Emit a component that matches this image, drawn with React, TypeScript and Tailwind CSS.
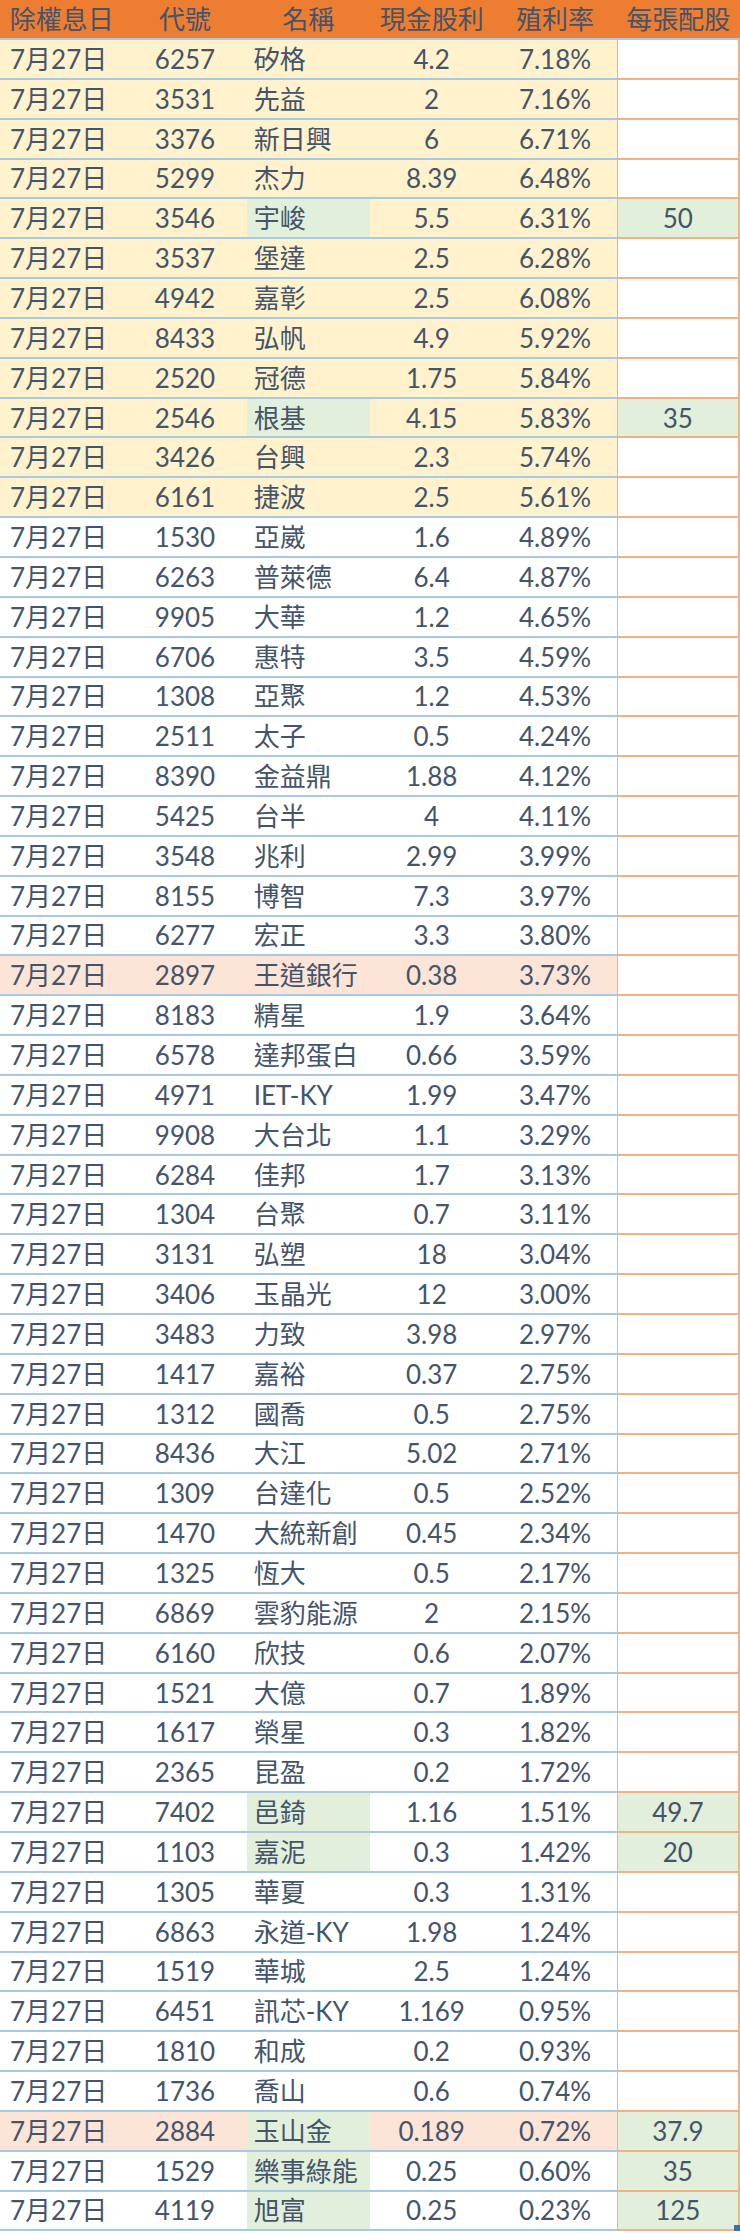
type Row = [string, string, string, string, string?];

// 除權息日 7月27日 — 代號, 名稱, 現金股利, 殖利率, 每張配股
const rows: Row[] = [
  ['6257', '矽格', '4.2', '7.18%'],
  ['3531', '先益', '2', '7.16%'],
  ['3376', '新日興', '6', '6.71%'],
  ['5299', '杰力', '8.39', '6.48%'],
  ['3546', '宇峻', '5.5', '6.31%', '50'],
  ['3537', '堡達', '2.5', '6.28%'],
  ['4942', '嘉彰', '2.5', '6.08%'],
  ['8433', '弘帆', '4.9', '5.92%'],
  ['2520', '冠德', '1.75', '5.84%'],
  ['2546', '根基', '4.15', '5.83%', '35'],
  ['3426', '台興', '2.3', '5.74%'],
  ['6161', '捷波', '2.5', '5.61%'],
  ['1530', '亞崴', '1.6', '4.89%'],
  ['6263', '普萊德', '6.4', '4.87%'],
  ['9905', '大華', '1.2', '4.65%'],
  ['6706', '惠特', '3.5', '4.59%'],
  ['1308', '亞聚', '1.2', '4.53%'],
  ['2511', '太子', '0.5', '4.24%'],
  ['8390', '金益鼎', '1.88', '4.12%'],
  ['5425', '台半', '4', '4.11%'],
  ['3548', '兆利', '2.99', '3.99%'],
  ['8155', '博智', '7.3', '3.97%'],
  ['6277', '宏正', '3.3', '3.80%'],
  ['2897', '王道銀行', '0.38', '3.73%'],
  ['8183', '精星', '1.9', '3.64%'],
  ['6578', '達邦蛋白', '0.66', '3.59%'],
  ['4971', 'IET-KY', '1.99', '3.47%'],
  ['9908', '大台北', '1.1', '3.29%'],
  ['6284', '佳邦', '1.7', '3.13%'],
  ['1304', '台聚', '0.7', '3.11%'],
  ['3131', '弘塑', '18', '3.04%'],
  ['3406', '玉晶光', '12', '3.00%'],
  ['3483', '力致', '3.98', '2.97%'],
  ['1417', '嘉裕', '0.37', '2.75%'],
  ['1312', '國喬', '0.5', '2.75%'],
  ['8436', '大江', '5.02', '2.71%'],
  ['1309', '台達化', '0.5', '2.52%'],
  ['1470', '大統新創', '0.45', '2.34%'],
  ['1325', '恆大', '0.5', '2.17%'],
  ['6869', '雲豹能源', '2', '2.15%'],
  ['6160', '欣技', '0.6', '2.07%'],
  ['1521', '大億', '0.7', '1.89%'],
  ['1617', '榮星', '0.3', '1.82%'],
  ['2365', '昆盈', '0.2', '1.72%'],
  ['7402', '邑錡', '1.16', '1.51%', '49.7'],
  ['1103', '嘉泥', '0.3', '1.42%', '20'],
  ['1305', '華夏', '0.3', '1.31%'],
  ['6863', '永道-KY', '1.98', '1.24%'],
  ['1519', '華城', '2.5', '1.24%'],
  ['6451', '訊芯-KY', '1.169', '0.95%'],
  ['1810', '和成', '0.2', '0.93%'],
  ['1736', '喬山', '0.6', '0.74%'],
  ['2884', '玉山金', '0.189', '0.72%', '37.9'],
  ['1529', '樂事綠能', '0.25', '0.60%', '35'],
  ['4119', '旭富', '0.25', '0.23%', '125'],
];

const pinkCodes = ['2897', '2884'];
const headers = ['除權息日', '代號', '名稱', '現金股利', '殖利率', '每張配股'];

const cell = 'flex items-center border-b-2 border-[#A8C8E4]';

export default function App() {
  return (
    <div className="relative w-[740px] bg-white text-[26px] leading-none text-[#44546A] font-['Lato','Noto_Sans_CJK_TC',sans-serif]">
      {/* header */}
      <div className="grid grid-cols-6 h-[40px] bg-[#ED7D31] border-b-2 border-[#B7C6D6]">
        {headers.map(h => (
          <div key={h} className="flex items-center justify-center">{h}</div>
        ))}
      </div>

      {rows.map(([code, name, cash, yld, extra], i) => {
        const bg = pinkCodes.includes(code) ? 'bg-[#FCE4D6]' : i < 12 ? 'bg-[#FFF2CC]' : 'bg-white';
        const nameBg = extra ? 'bg-[#E2EFDA]' : bg;
        return (
          <div key={code} className="grid grid-cols-6 h-[39.85px]">
            <div className={`${cell} ${bg} pl-[10px]`}>7月27日</div>
            <div className={`${cell} ${bg} justify-center`}>{code}</div>
            <div className={`${cell} ${nameBg} pl-[7px] whitespace-nowrap`}>{name}</div>
            <div className={`${cell} ${bg} justify-center`}>{cash}</div>
            <div className={`${cell} ${bg} justify-center`}>{yld}</div>
            <div
              className={`flex items-center justify-center border-b-2 border-l border-r-2 border-[#F4B084] ${
                extra ? 'bg-[#E2EFDA]' : 'bg-white'
              }`}
            >
              {extra}
            </div>
          </div>
        );
      })}

      {/* table resize handle */}
      <div className="absolute right-0 bottom-0 w-[6px] h-[6px] bg-[#3A6DB5]" />
    </div>
  );
}
